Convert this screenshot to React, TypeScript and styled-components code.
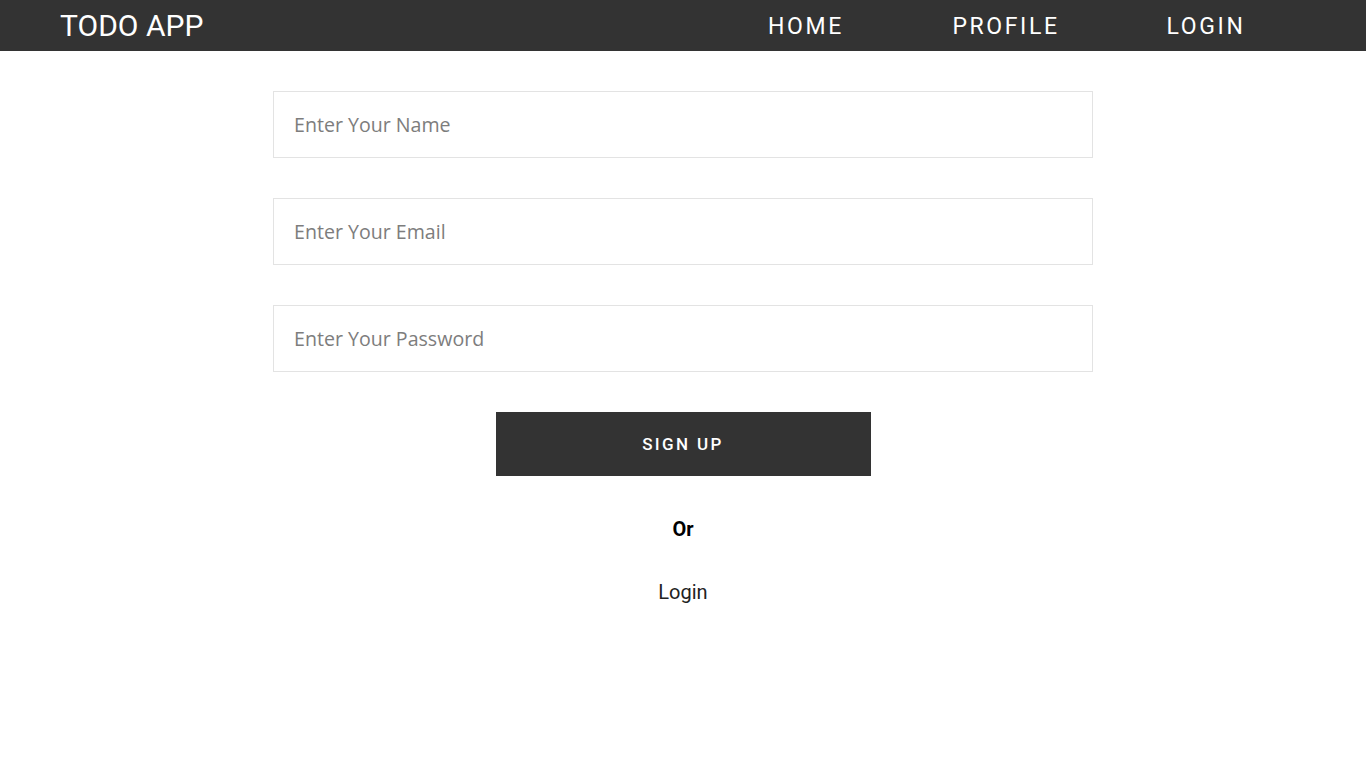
import React from "react";
import styled, { createGlobalStyle } from "styled-components";

const Global = createGlobalStyle`
  * { box-sizing: border-box; }
  body { margin: 0; background: #fff; font-family: Roboto, "Liberation Sans", sans-serif; }
`;

const NavBar = styled.nav`
  height: 51px;
  background: #333333;
  display: flex;
  align-items: center;
  justify-content: space-between;
  padding: 0 60px 0 60px;
`;

const Brand = styled.div`
  color: #fff;
  font-family: Roboto, sans-serif;
  font-size: 30px;
  font-weight: 400;
`;

const NavList = styled.ul`
  display: flex;
  list-style: none;
  margin: 0;
  padding: 0;
`;

const NavItem = styled.li`
  width: 200px;
  text-align: center;
  color: #fff;
  font-size: 23px;
  letter-spacing: 2.6px;
  font-weight: 400;
  padding-top: 2px;
`;

const Form = styled.form`
  width: 820px;
  margin: 40px auto 0;
  display: flex;
  flex-direction: column;
  align-items: center;
  gap: 40px;
`;

const Input = styled.input`
  width: 100%;
  height: 67px;
  border: 1px solid #e3e3e3;
  padding: 0 20px;
  font-family: "Open Sans", Lato, sans-serif;
  font-size: 19.6px;
  outline: none;
  &::placeholder { color: #7d7d7d; }
`;

const Button = styled.button`
  width: 375px;
  height: 64px;
  background: #333333;
  color: #fff;
  border: none;
  font-family: Roboto, sans-serif;
  font-size: 17px;
  letter-spacing: 2.4px;
  font-weight: 500;
`;

const Or = styled.div`
  margin-top: 41px;
  text-align: center;
  font-size: 20px;
  font-weight: 700;
  color: #000;
`;

const LoginLink = styled.div`
  margin-top: 39px;
  text-align: center;
  font-size: 20px;
  color: #222;
`;

export default function App() {
  return (
    <>
      <Global />
      <NavBar>
        <Brand>TODO APP</Brand>
        <NavList>
          <NavItem>HOME</NavItem>
          <NavItem>PROFILE</NavItem>
          <NavItem>LOGIN</NavItem>
        </NavList>
      </NavBar>
      <Form onSubmit={(e) => e.preventDefault()}>
        <Input placeholder="Enter Your Name" />
        <Input placeholder="Enter Your Email" />
        <Input type="password" placeholder="Enter Your Password" />
        <Button type="submit">SIGN UP</Button>
      </Form>
      <Or>Or</Or>
      <LoginLink>Login</LoginLink>
    </>
  );
}
